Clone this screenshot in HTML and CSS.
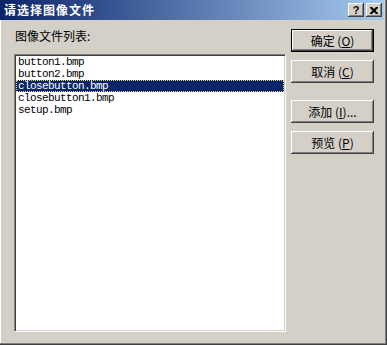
FILE: index.html
```html
<!DOCTYPE html>
<html>
<head>
  <meta charset="UTF-8">
  <title>请选择图像文件</title>
  <link rel="stylesheet" href="styles.css">
</head>
<body>
  <div class="window">
    <div class="titlebar">
      <div class="title">请选择图像文件</div>
      <div class="caption-buttons">
        <div class="cap-btn help">?</div>
        <div class="cap-btn close">
          <svg width="8" height="7" viewBox="0 0 8 7">
            <path d="M0 0h2l2 2 2-2h2v1l-2.5 2.5L8 6v1H6L4 5 2 7H0V6l2.5-2.5L0 1z" fill="#000"/>
          </svg>
        </div>
      </div>
    </div>

    <div class="client">
      <div class="list-col">
        <div class="label">图像文件列表:</div>
        <div class="listbox">
          <div class="item">button1.bmp</div>
          <div class="item">button2.bmp</div>
          <div class="item selected">closebutton.bmp</div>
          <div class="item">closebutton1.bmp</div>
          <div class="item">setup.bmp</div>
        </div>
      </div>

      <div class="button-col">
        <div class="btn default">确定 (<u>O</u>)</div>
        <div class="btn">取消 (<u>C</u>)</div>
        <div class="btn spaced">添加 (<u>I</u>)...</div>
        <div class="btn">预览 (<u>P</u>)</div>
      </div>
    </div>
  </div>
</body>
</html>
```

FILE: styles.css
```css
body {
  margin: 0;
  background-color: #d4d0c8;
  font-family: "Noto Sans CJK SC", "Liberation Sans", sans-serif;
  font-size: 12px;
  color: #000000;
}

.window {
  width: 387px;
  height: 345px;
  box-sizing: border-box;
  padding: 0 3px 3px 0;
  background-color: #d4d0c8;
  box-shadow: inset -1px -1px #404040, inset -2px -2px #808080, inset 1px 0 #ffffff;
  display: flex;
  flex-direction: column;
}

/* title bar */
.titlebar {
  height: 20px;
  display: flex;
  align-items: center;
  justify-content: space-between;
  background: linear-gradient(90deg, #0a246a, #a6caf0);
  padding: 0 2px 0 4px;
}

.title {
  color: #ffffff;
  font-weight: bold;
  font-size: 12px;
  line-height: 14px;
  letter-spacing: 1px;
}

.caption-buttons {
  display: flex;
  gap: 2px;
}

.cap-btn {
  width: 16px;
  height: 14px;
  box-sizing: border-box;
  background-color: #d4d0c8;
  box-shadow: inset -1px -1px #404040, inset 1px 1px #ffffff, inset -2px -2px #808080;
  display: flex;
  align-items: center;
  justify-content: center;
}

.help {
  font-family: "Liberation Sans", sans-serif;
  font-weight: bold;
  font-size: 11px;
  line-height: 11px;
}

/* client area */
.client {
  flex: 1;
  display: flex;
  align-items: flex-start;
  padding: 9px 7px 0 14px;
  gap: 5px;
}

.list-col {
  display: flex;
  flex-direction: column;
  margin-top: 1px;
}

.label {
  height: 12px;
  line-height: 12px;
  padding-left: 1px;
}

.listbox {
  width: 272px;
  height: 278px;
  box-sizing: border-box;
  margin-top: 12px;
  padding: 1px;
  background-color: #ffffff;
  border-top: 1px solid #808080;
  border-left: 1px solid #808080;
  border-right: 1px solid #ffffff;
  border-bottom: 1px solid #ffffff;
  box-shadow: inset 1px 1px #404040, inset -1px -1px #d4d0c8;
}

.item {
  height: 12px;
  line-height: 12px;
  padding-left: 2px;
  font-family: "Liberation Mono", monospace;
  font-size: 11px;
  letter-spacing: -0.6px;
  white-space: nowrap;
}

.item.selected {
  background-color: #0a246a;
  color: #ffffff;
  outline: 1px dotted #e8d48a;
  outline-offset: -1px;
}

/* buttons */
.button-col {
  display: flex;
  flex-direction: column;
  gap: 8px;
}

.btn {
  width: 83px;
  height: 23px;
  box-sizing: border-box;
  display: flex;
  align-items: center;
  justify-content: center;
  background-color: #d4d0c8;
  box-shadow: inset -1px -1px #404040, inset 1px 1px #ffffff, inset -2px -2px #808080;
  line-height: 12px;
}

.btn.default {
  border: 1px solid #000000;
}

.btn.spaced {
  margin-top: 9px;
}

.btn u {
  text-underline-offset: 1px;
}
```
